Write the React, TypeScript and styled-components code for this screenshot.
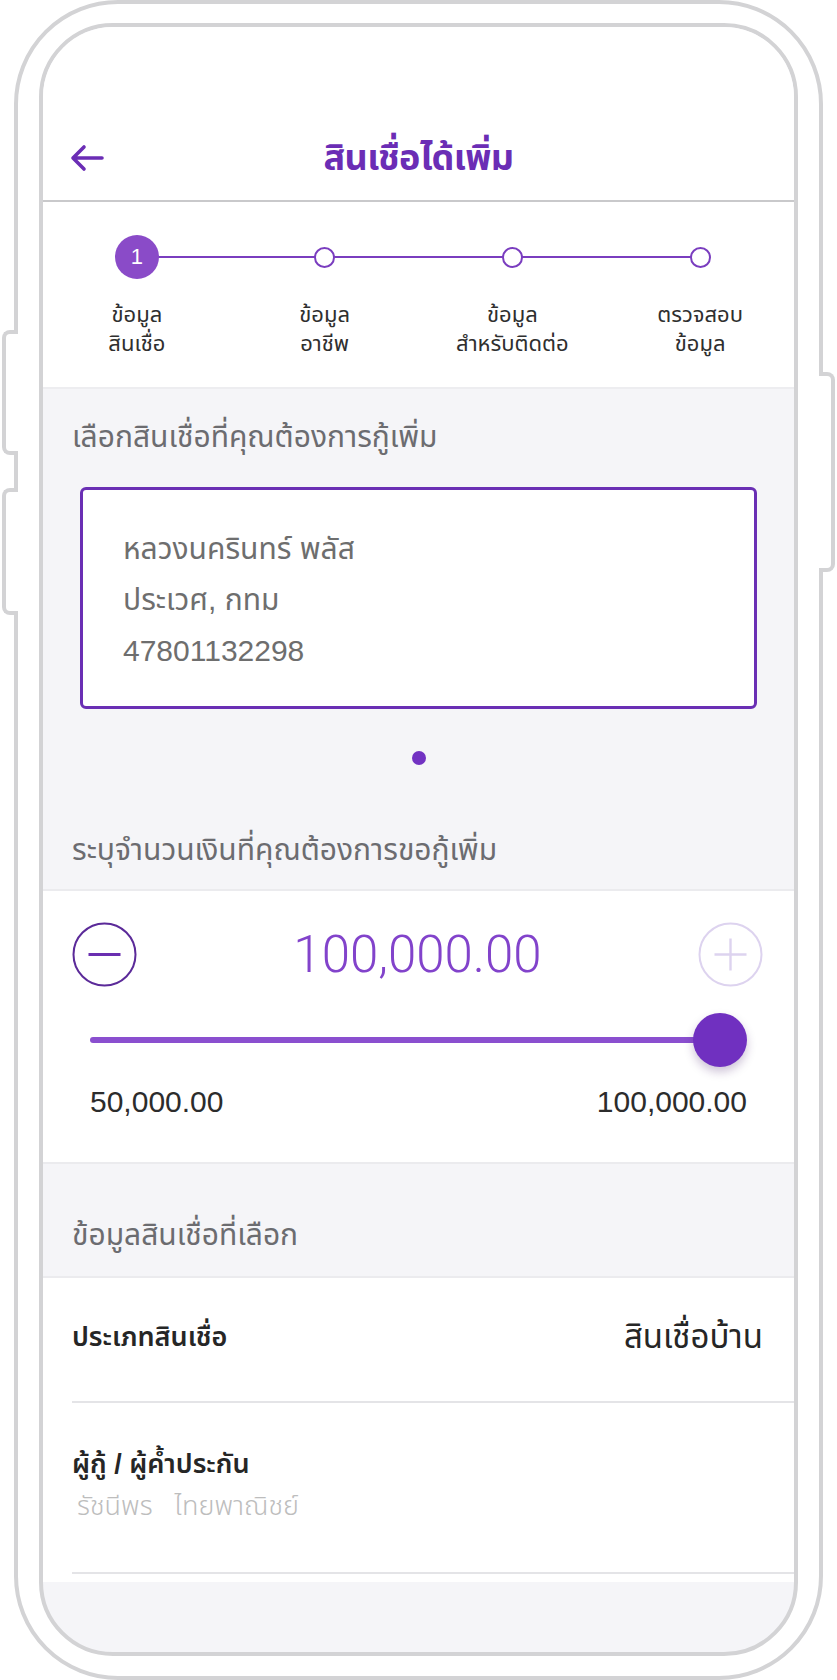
import React from 'react';
import styled, { createGlobalStyle } from 'styled-components';

const GlobalStyle = createGlobalStyle`
  html, body {
    margin: 0;
    padding: 0;
    background: #fff;
  }
  body {
    font-family: "Liberation Sans", "Noto Sans Thai", "Noto Sans Thai UI", Loma, Garuda, "Noto Sans", sans-serif;
    -webkit-font-smoothing: antialiased;
  }
`;

const frameGray = '#d3d3d5';
const purple = '#6b2db5';

const Phone = styled.div`
  position: relative;
  box-sizing: border-box;
  width: 809px;
  height: 1680px;
  margin-left: 14px;
  padding: 19px 21px 20px;
  border: 4px solid ${frameGray};
  border-radius: 104px;
  background: #fff;
`;

const SideButton = styled.div<{ $side: 'left' | 'right'; $top: number; $height: number }>`
  position: absolute;
  top: ${(p) => p.$top}px;
  height: ${(p) => p.$height}px;
  width: 16px;
  box-sizing: border-box;
  background: #fff;
  border: 4px solid ${frameGray};
  ${(p) =>
    p.$side === 'left'
      ? `left: -16px; border-right: none; border-radius: 8px 0 0 8px;`
      : `right: -16px; border-left: none; border-radius: 0 8px 8px 0;`}
`;

const Screen = styled.div`
  height: 100%;
  box-sizing: border-box;
  border: 4px solid ${frameGray};
  border-radius: 74px;
  overflow: hidden;
  background: #f5f5f8;
  display: flex;
  flex-direction: column;
`;

const Header = styled.header`
  background: #fff;
  padding-top: 88px;
  height: 85px;
  display: grid;
  grid-template-columns: 1fr auto 1fr;
  align-items: center;
  border-bottom: 2px solid #c9c9cb;
`;

const BackButton = styled.button`
  justify-self: start;
  margin-left: 27px;
  border: none;
  background: none;
  padding: 0;
  display: flex;
  color: ${purple};
`;

const Title = styled.h1`
  margin: 0;
  font-size: 36px;
  line-height: 48px;
  font-weight: 700;
  color: ${purple};
  letter-spacing: -0.5px;
`;

const Stepper = styled.section`
  background: #fff;
  display: grid;
  grid-template-columns: repeat(4, 1fr);
  padding: 33px 0 29px;
  border-bottom: 2px solid #ededf0;
`;

const Step = styled.div<{ $first?: boolean; $last?: boolean }>`
  position: relative;
  display: flex;
  flex-direction: column;
  align-items: center;

  &::before,
  &::after {
    content: '';
    position: absolute;
    top: 21px;
    height: 2px;
    width: 50%;
    background: #7a3dbf;
  }
  &::before {
    left: 0;
    display: ${(p) => (p.$first ? 'none' : 'block')};
  }
  &::after {
    right: 0;
    display: ${(p) => (p.$last ? 'none' : 'block')};
  }
`;

const MarkerBox = styled.div`
  position: relative;
  z-index: 1;
  height: 44px;
  display: flex;
  align-items: center;
  justify-content: center;
`;

const Marker = styled.div<{ $active?: boolean }>`
  box-sizing: border-box;
  border-radius: 50%;
  display: flex;
  align-items: center;
  justify-content: center;
  ${(p) =>
    p.$active
      ? `width: 44px; height: 44px; background: #8a4bc8; color: #fff; font-size: 22px;`
      : `width: 21px; height: 21px; background: #fff; border: 2px solid #7a3dbf;`}
`;

const StepLabel = styled.div`
  margin-top: 21px;
  font-size: 22px;
  line-height: 29px;
  color: #2f2f2f;
  text-align: center;
`;

const SectionLabel = styled.div<{ $pt: number; $pb: number }>`
  padding: ${(p) => p.$pt}px 29px ${(p) => p.$pb}px;
  font-size: 30px;
  line-height: 40px;
  color: #6c6c70;
`;

const LoanCard = styled.div`
  margin: 0 37px;
  height: 222px;
  box-sizing: border-box;
  border: 3px solid #6a2fb4;
  border-radius: 6px;
  background: #fff;
  padding: 33px 40px 0;
`;

const CardLine = styled.div`
  font-size: 30px;
  line-height: 51px;
  color: #6e6e6e;
`;

const Pager = styled.div`
  display: flex;
  justify-content: center;
  padding-top: 42px;
`;

const Dot = styled.span`
  width: 14px;
  height: 14px;
  border-radius: 50%;
  background: #7232c2;
`;

const AmountPanel = styled.section`
  background: #fff;
  border-top: 2px solid #ebebee;
  border-bottom: 2px solid #ebebee;
  padding: 31px 0 43px;
`;

const AmountRow = styled.div`
  display: flex;
  align-items: center;
  justify-content: space-between;
  padding: 0 31px 0 29px;
`;

const RoundButton = styled.button`
  width: 65px;
  height: 65px;
  padding: 0;
  border: none;
  background: none;
  display: flex;
`;

const Amount = styled.div`
  font-family: Roboto, "Liberation Sans", sans-serif;
  font-weight: 300;
  font-size: 51px;
  line-height: 58px;
  color: #8243cb;
`;

const SliderBox = styled.div`
  position: relative;
  height: 54px;
  margin: 26px 47px 0;
  display: flex;
  align-items: center;
`;

const Track = styled.div`
  flex: 1;
  height: 6px;
  margin-right: 18px;
  border-radius: 3px;
  background: #8a4fcf;
`;

const Thumb = styled.div`
  position: absolute;
  top: 0;
  width: 54px;
  height: 54px;
  border-radius: 50%;
  background: #7030c0;
  box-shadow: 0 5px 10px rgba(60, 20, 100, 0.25);
`;

const RangeLabels = styled.div`
  display: flex;
  justify-content: space-between;
  margin: 18px 47px 0;
  font-size: 30px;
  line-height: 34px;
  color: #2c2c2c;
`;

const InfoList = styled.section`
  background: #fff;
  border-top: 2px solid #ebebee;
  padding-left: 29px;
  padding-bottom: 8px;
`;

const InfoRow = styled.div<{ $height: number; $lift?: number }>`
  height: ${(p) => p.$height}px;
  box-sizing: border-box;
  display: flex;
  align-items: center;
  justify-content: space-between;
  padding-right: 31px;
  padding-bottom: ${(p) => p.$lift ?? 0}px;
  border-bottom: 2px solid #e4e4e7;
`;

const InfoStack = styled.div`
  display: flex;
  flex-direction: column;
  gap: 6px;
`;

const InfoTitle = styled.div`
  font-size: 27px;
  line-height: 38px;
  font-weight: 600;
  color: #262626;
`;

const InfoValue = styled.div`
  font-size: 33px;
  line-height: 44px;
  color: #262626;
`;

const InfoSub = styled.div`
  display: flex;
  gap: 22px;
  padding-left: 5px;
  font-size: 27px;
  line-height: 34px;
  font-weight: 300;
  color: #bdbdbd;
`;

const steps = [
  ['ข้อมูล', 'สินเชื่อ'],
  ['ข้อมูล', 'อาชีพ'],
  ['ข้อมูล', 'สำหรับติดต่อ'],
  ['ตรวจสอบ', 'ข้อมูล'],
];

const ArrowLeft = () => (
  <svg width="34" height="28" viewBox="0 0 34 28" fill="none">
    <path d="M32 14H3M14 3L3 14l11 11" stroke="currentColor" strokeWidth="3.6" strokeLinecap="round" strokeLinejoin="round" />
  </svg>
);

const MinusIcon = () => (
  <svg width="65" height="65" viewBox="0 0 65 65" fill="none">
    <circle cx="32.5" cy="32.5" r="31" stroke="#5b2a99" strokeWidth="2" />
    <path d="M16.5 32.5h32" stroke="#6a2fb0" strokeWidth="3.2" />
  </svg>
);

const PlusIcon = () => (
  <svg width="65" height="65" viewBox="0 0 65 65" fill="none">
    <circle cx="32.5" cy="32.5" r="31" stroke="#ddd3ef" strokeWidth="2" />
    <path d="M16.5 32.5h32M32.5 16.5v32" stroke="#ddd3ef" strokeWidth="2.4" />
  </svg>
);

export default function App() {
  const min = 50000;
  const max = 100000;
  const value = 100000;
  const pct = (value - min) / (max - min);

  return (
    <>
      <GlobalStyle />
      <Phone>
        <SideButton $side="left" $top={326} $height={125} />
        <SideButton $side="left" $top={484} $height={127} />
        <SideButton $side="right" $top={368} $height={200} />
        <Screen>
          <Header>
            <BackButton aria-label="back">
              <ArrowLeft />
            </BackButton>
            <Title>สินเชื่อได้เพิ่ม</Title>
            <span />
          </Header>

          <Stepper>
            {steps.map((lines, i) => (
              <Step key={i} $first={i === 0} $last={i === steps.length - 1}>
                <MarkerBox>
                  <Marker $active={i === 0}>{i === 0 ? '1' : null}</Marker>
                </MarkerBox>
                <StepLabel>
                  {lines[0]}
                  <br />
                  {lines[1]}
                </StepLabel>
              </Step>
            ))}
          </Stepper>

          <SectionLabel $pt={28} $pb={30}>เลือกสินเชื่อที่คุณต้องการกู้เพิ่ม</SectionLabel>
          <LoanCard>
            <CardLine>หลวงนครินทร์ พลัส</CardLine>
            <CardLine>ประเวศ, กทม</CardLine>
            <CardLine>47801132298</CardLine>
          </LoanCard>
          <Pager>
            <Dot />
          </Pager>
          <SectionLabel $pt={65} $pb={19}>ระบุจำนวนเงินที่คุณต้องการขอกู้เพิ่ม</SectionLabel>

          <AmountPanel>
            <AmountRow>
              <RoundButton aria-label="decrease">
                <MinusIcon />
              </RoundButton>
              <Amount>100,000.00</Amount>
              <RoundButton aria-label="increase">
                <PlusIcon />
              </RoundButton>
            </AmountRow>
            <SliderBox>
              <Track />
              <Thumb style={{ left: `calc(${pct} * (100% - 54px))` }} />
            </SliderBox>
            <RangeLabels>
              <span>50,000.00</span>
              <span>100,000.00</span>
            </RangeLabels>
          </AmountPanel>

          <SectionLabel $pt={51} $pb={21}>ข้อมูลสินเชื่อที่เลือก</SectionLabel>

          <InfoList>
            <InfoRow $height={125} $lift={6}>
              <InfoTitle>ประเภทสินเชื่อ</InfoTitle>
              <InfoValue>สินเชื่อบ้าน</InfoValue>
            </InfoRow>
            <InfoRow $height={171} $lift={8}>
              <InfoStack>
                <InfoTitle>ผู้กู้ / ผู้ค้ำประกัน</InfoTitle>
                <InfoSub>
                  <span>รัชนีพร</span>
                  <span>ไทยพาณิชย์</span>
                </InfoSub>
              </InfoStack>
            </InfoRow>
          </InfoList>
        </Screen>
      </Phone>
    </>
  );
}
